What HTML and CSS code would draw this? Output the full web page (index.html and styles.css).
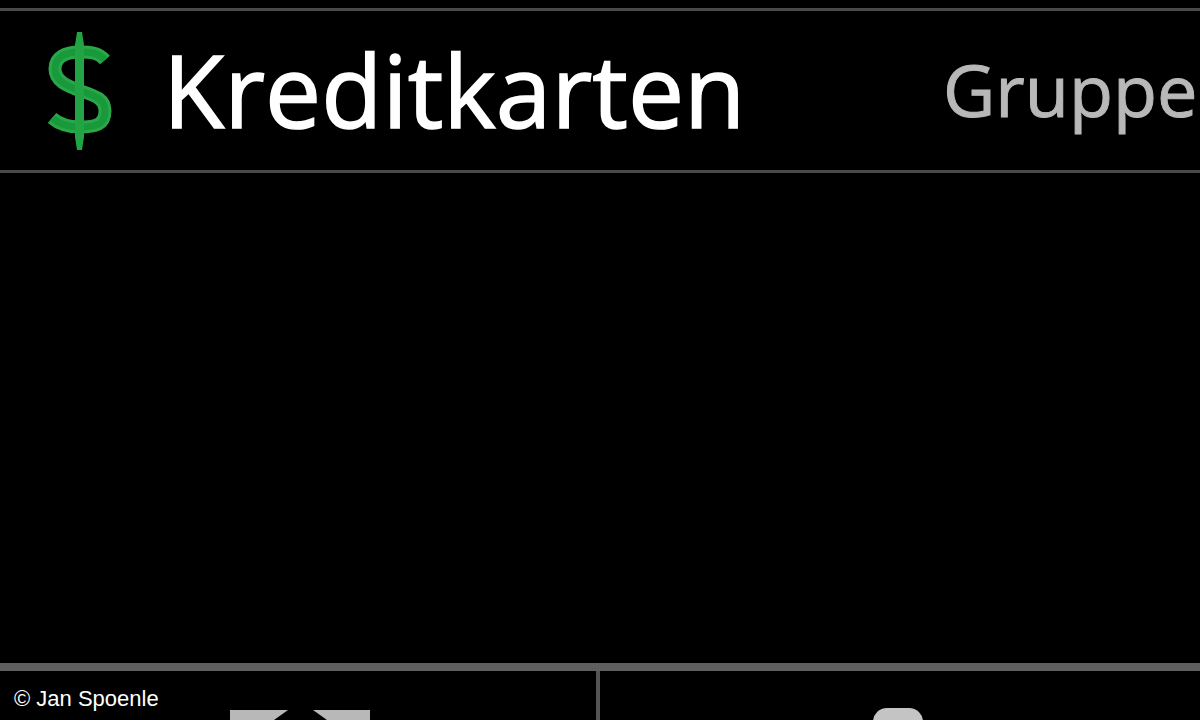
FILE: index.html
```html
<!DOCTYPE html>
<html lang="de">
<head>
<meta charset="utf-8">
<title>Kreditkarten</title>
<link rel="stylesheet" href="styles.css">
</head>
<body>
<div class="screen">
  <div class="top-gap"></div>
  <div class="row">
    <svg class="dollar" viewBox="0 0 70 120" width="70" height="120" aria-hidden="true">
      <path class="s-edge" d="M60 29 C53 21 44 21 35 21 C20 21 10 26 10 38 C10 50 22 55 36 60 C51 65 60 68 60 80 C60 94 50 96 35 96 C24 96 14 93 7 87"/>
      <path class="s-main" d="M60 29 C53 21 44 21 35 21 C20 21 10 26 10 38 C10 50 22 55 36 60 C51 65 60 68 60 80 C60 94 50 96 35 96 C24 96 14 93 7 87"/>
      <path class="bar" d="M32 1 H37 L39 14 V106 L37 119 H32 L30 106 V14 Z"/>
    </svg>
    <span class="title">Kreditkarten</span>
    <span class="group">Gruppe</span>
  </div>
  <div class="list"></div>
  <div class="tabs">
    <div class="tab tab-left">
      <span class="credit">© Jan Spoenle</span>
      <svg class="icon-a" viewBox="0 0 140 10" width="140" height="10" aria-hidden="true">
        <path d="M0 0 H58 L44 10 H0 Z M83 0 H140 V10 H97 Z"/>
      </svg>
    </div>
    <div class="tab tab-right">
      <div class="icon-b"></div>
    </div>
  </div>
</div>
</body>
</html>
```
FILE: styles.css
```css
html, body {
  margin: 0;
  padding: 0;
  background: #000;
}
.screen {
  width: 1200px;
  height: 720px;
  overflow: hidden;
  display: flex;
  flex-direction: column;
  background: #000;
  font-family: "Open Sans", "Noto Sans", sans-serif;
}
.top-gap {
  height: 8px;
  border-bottom: 3px solid #4a4a4a;
  flex: none;
}
.row {
  height: 159px;
  flex: none;
  display: flex;
  align-items: center;
  padding-left: 45px;
  border-bottom: 3px solid #4a4a4a;
  white-space: nowrap;
  overflow: hidden;
}
.dollar {
  flex: none;
  margin-right: 48px;
}
.s-edge {
  fill: none;
  stroke: #2aa848;
  stroke-width: 13;
}
.s-main {
  fill: none;
  stroke: #189a3c;
  stroke-width: 7;
}
.bar {
  fill: #22a444;
}
.title {
  color: #fff;
  -webkit-text-stroke: 1.5px #fff;
  font-size: 100px;
  line-height: 1;
  width: 780px;
  margin-bottom: 4px;
  flex: none;
}
.group {
  color: #b8b8b8;
  -webkit-text-stroke: 1px #b8b8b8;
  font-size: 72px;
  line-height: 1;
  margin-bottom: 4px;
  flex: none;
}
.list {
  flex: 1;
}
.tabs {
  height: 49px;
  flex: none;
  border-top: 8px solid #5f5f5f;
  display: flex;
}
.tab {
  position: relative;
  overflow: hidden;
}
.tab-left {
  width: 596px;
  border-right: 4px solid #555;
}
.tab-right {
  flex: 1;
}
.credit {
  display: block;
  padding: 15px 0 0 14px;
  color: #fff;
  font: 22px/26px "Liberation Sans", Arial, sans-serif;
}
.icon-a {
  position: absolute;
  left: 230px;
  top: 39px;
  fill: #b8b8b8;
}
.icon-b {
  position: absolute;
  left: 273px;
  top: 37px;
  width: 50px;
  height: 30px;
  border-radius: 14px 14px 0 0;
  background: #c4c4c4;
}
```
